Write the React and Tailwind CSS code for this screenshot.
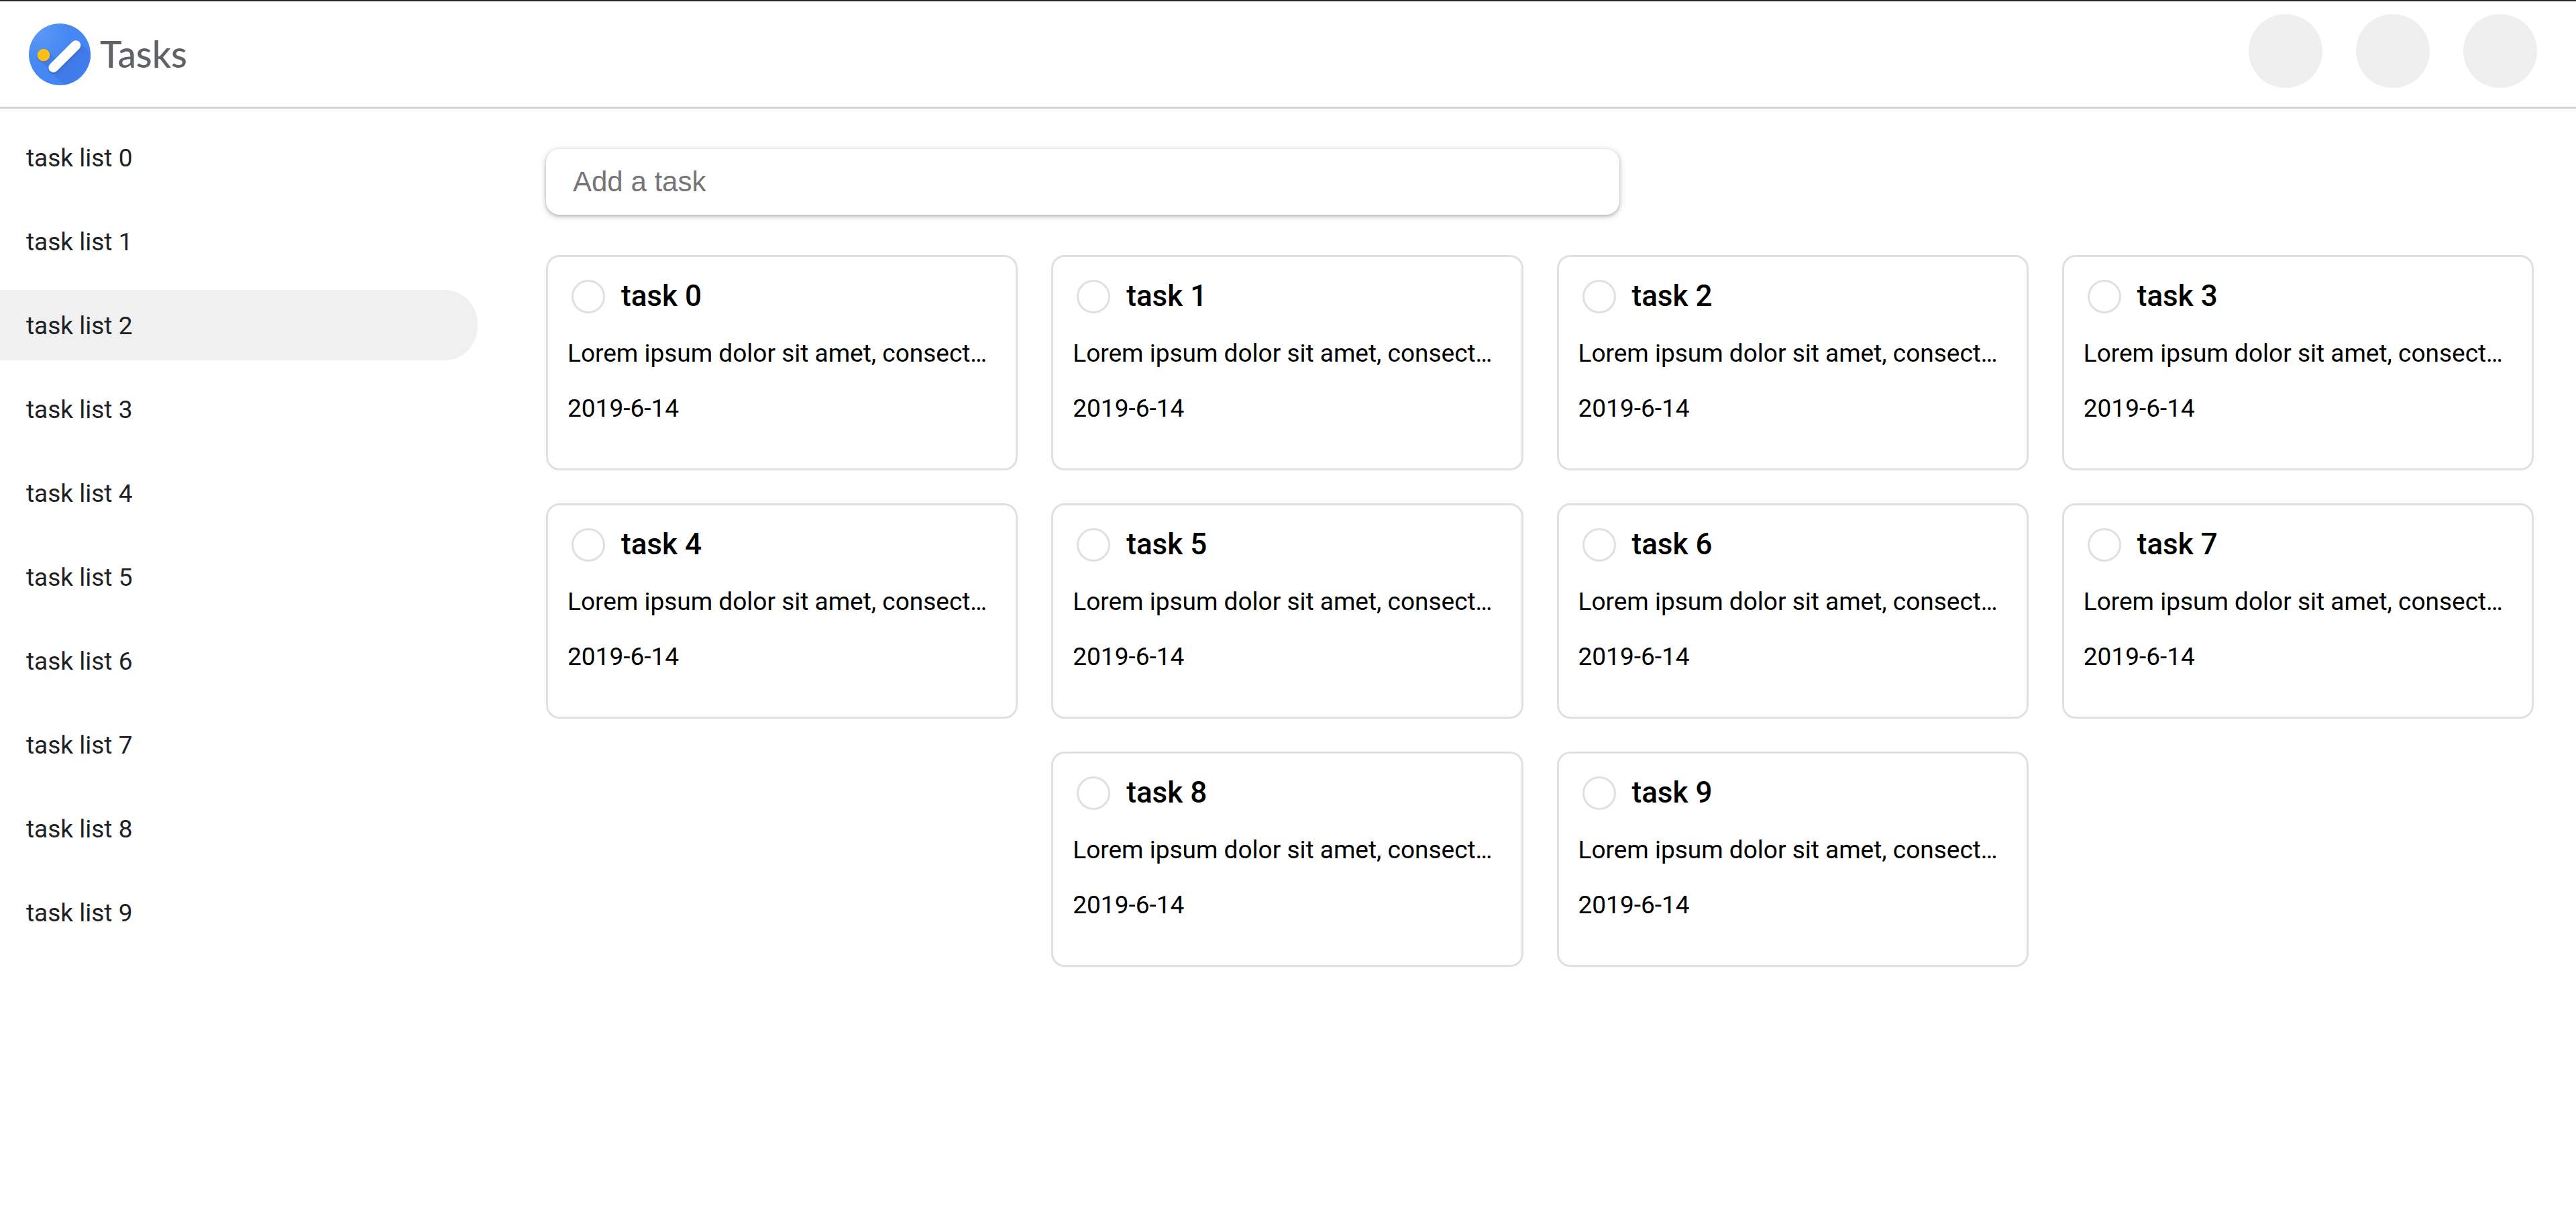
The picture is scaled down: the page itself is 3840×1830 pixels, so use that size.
import React, { useState } from "react";

const LISTS = Array.from({ length: 10 }, (_, i) => `task list ${i}`);
const NOTE = "Lorem ipsum dolor sit amet, consectetur adipiscing elit";
const TASKS = Array.from({ length: 10 }, (_, i) => ({
  title: `task ${i}`,
  note: NOTE,
  date: "2019-6-14",
}));

const shorten = (text, length) => (text.length > length ? text.slice(0, length) + "…" : text);

function Logo() {
  return (
    <svg className="size-[92px]" viewBox="0 0 92 92" aria-hidden="true">
      <defs>
        <radialGradient id="disc" cx="0.15" cy="0.12" r="1">
          <stop offset="0" stopColor="#5c98f7" />
          <stop offset="0.5" stopColor="#4788f3" />
          <stop offset="1" stopColor="#4285f4" />
        </radialGradient>
        <linearGradient id="cast" x1="0.1" y1="0.1" x2="0.6" y2="0.6">
          <stop offset="0" stopColor="#3f74de" />
          <stop offset="1" stopColor="#427ff0" />
        </linearGradient>
        <clipPath id="round">
          <circle cx="46" cy="46" r="46" />
        </clipPath>
        <filter id="soft" x="-20%" y="-20%" width="140%" height="150%">
          <feGaussianBlur stdDeviation="1.3" />
        </filter>
      </defs>
      <g clipPath="url(#round)">
        <rect width="92" height="92" fill="url(#disc)" />
        <path d="M15.5 53.5 28.5 40.5 42 54 29 67Z" fill="#3f78e6" opacity="0.7" />
        <path d="M31.5 71 75.5 27.5 120 72 76 115.5Z" fill="url(#cast)" />
        <g filter="url(#soft)" opacity="0.3">
          <circle cx="22" cy="48.5" r="9.3" fill="#1d3f8f" />
          <path d="M36.7 67.5 70 34.5" stroke="#1d3f8f" strokeWidth="15" strokeLinecap="round" />
        </g>
        <circle cx="22" cy="47" r="9.3" fill="#fbc016" />
        <path d="M36.7 65.7 70 32.5" stroke="#fff" strokeWidth="14.6" strokeLinecap="round" />
      </g>
    </svg>
  );
}

function Header() {
  return (
    <header className="flex h-[162px] items-center justify-between border-t-2 border-b-3 border-t-[#2a2a2d] border-b-[#d4d4d4] pr-[58px] pl-[43px]">
      <div className="flex items-center gap-[14px]">
        <Logo />
        <h1 className="pb-[2px] font-['Lato',sans-serif] text-[55px] leading-[64px] font-medium text-[#5f6368]">Tasks</h1>
      </div>
      <div className="flex gap-[50px] pb-[10px]">
        {["Search", "Apps", "Account"].map((label) => (
          <button key={label} type="button" aria-label={label} className="size-[110px] rounded-full bg-[#efefef]" />
        ))}
      </div>
    </header>
  );
}

function Sidebar({ active, onSelect }) {
  return (
    <nav className="flex w-[712px] shrink-0 flex-col gap-[20px] pt-[20px]">
      {LISTS.map((name, i) => (
        <button
          key={name}
          type="button"
          onClick={() => onSelect(i)}
          className={
            "h-[105px] rounded-r-[50px] pt-[2px] pl-[39px] text-left text-[37px] leading-[44px] text-[#202124] " +
            (i === active ? "bg-[#f0f0f0]" : "")
          }
        >
          {name}
        </button>
      ))}
    </nav>
  );
}

function TaskCard({ task }) {
  return (
    <li className="h-[321px] w-[calc((100%-150px)/4)] rounded-[20px] border-3 border-[#e0e0e0] px-[29px] pt-[34px]">
      <label className="flex items-start gap-[24px] pl-[6px] text-[44px] leading-[48px] font-medium">
        <input
          type="checkbox"
          className="size-[50px] shrink-0 appearance-none rounded-full border-3 border-[#e0e0e0] checked:bg-[#4285f4]"
        />
        {task.title}
      </label>
      <p className="mt-[38px] text-[37px] leading-[44px] whitespace-nowrap">{shorten(task.note, 35)}</p>
      <p className="mt-[38px] text-[37px] leading-[44px]">{task.date}</p>
    </li>
  );
}

export default function App() {
  const [active, setActive] = useState(2);
  return (
    <div className="min-h-screen bg-white font-['Roboto',sans-serif] text-black">
      <Header />
      <div className="flex">
        <Sidebar active={active} onSelect={setActive} />
        <main className="min-w-0 flex-1 pt-[60px] pr-[63px] pl-[102px]">
          <input
            type="text"
            aria-label="Add a task"
            placeholder="Add a task"
            className="block h-[98px] w-full max-w-[1600px] rounded-[20px] bg-white px-[40px] font-['Liberation_Sans',sans-serif] text-[42px] leading-[48px] shadow-[0_2px_5px_0_rgba(60,64,67,0.3),0_2px_8px_2px_rgba(60,64,67,0.15)] outline-none placeholder:text-[#757575]"
          />
          <ul className="mt-[60px] flex flex-wrap justify-center gap-x-[50px] gap-y-[49px]">
            {TASKS.map((task) => (
              <TaskCard key={task.title} task={task} />
            ))}
          </ul>
        </main>
      </div>
    </div>
  );
}
